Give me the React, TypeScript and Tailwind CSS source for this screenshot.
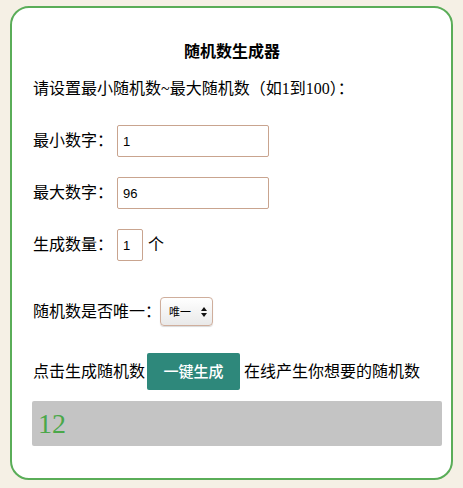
import { useState } from 'react'

const font = { fontFamily: '"Liberation Serif", "Noto Sans CJK SC", serif' }

function Field({ label, value, width }: { label: string; value: string; width: string }) {
	return (
		<div className="flex h-8 items-center">
			<span className="w-[84px] text-[16px] text-black">{label}</span>
			<input
				defaultValue={value}
				className={`${width} h-8 rounded-[2px] border border-[#c9a48f] bg-white px-[5px] text-[13px] text-black outline-none [font-family:'Liberation_Sans',sans-serif]`}
			/>
		</div>
	)
}

export default function App() {
	const [result] = useState('12')

	return (
		<div className="min-h-[488px] w-full bg-[#f5f0e5] px-[10px] pt-[6px] pb-[8px]" style={font}>
			<div className="flex h-[474px] flex-col rounded-[19px] border-2 border-[#5aad58] bg-white pl-[21px] pr-[9px]">
				<h1 className="mt-[33px] pr-[11px] text-center text-[16px] font-bold leading-[22px] text-black">
					随机数生成器
				</h1>
				<p className="mt-[15px] text-[16px] leading-[22px] text-black">
					请设置最小随机数~最大随机数（如1到100）：
				</p>

				<div className="mt-[25px] flex flex-col gap-5">
					<Field label="最小数字：" value="1" width="w-[152px]" />
					<Field label="最大数字：" value="96" width="w-[152px]" />
					<div className="flex h-8 items-center">
						<Field label="生成数量：" value="1" width="w-[26px]" />
						<span className="ml-[5px] text-[16px] text-black">个</span>
					</div>
				</div>

				<div className="mt-[36px] flex h-[29px] items-center">
					<span className="text-[16px] text-black">随机数是否唯一：</span>
					<div className="relative -ml-px">
						<select className="h-[29px] w-[53px] appearance-none rounded-[4px] border border-[#cfae9c] bg-gradient-to-b from-white to-[#e9e9e9] pl-[8px] text-[11px] text-black shadow-[0_1px_1px_rgba(0,0,0,0.15)] outline-none [font-family:'Noto_Sans_CJK_SC',sans-serif]">
							<option>唯一</option>
							<option>不唯一</option>
						</select>
						<svg
							className="pointer-events-none absolute right-[6px] top-[10px]"
							width="6"
							height="10"
							viewBox="0 0 6 10"
						>
							<path d="M3 0 L6 4 L0 4 Z M0 6 L6 6 L3 10 Z" fill="#111" />
						</svg>
					</div>
				</div>

				<div className="mt-[27px] flex h-[37px] items-center">
					<span className="text-[16px] text-black">点击生成随机数</span>
					<button className="ml-[2px] h-[37px] w-[93px] rounded-[2px] bg-[#2e887b] text-[15px] font-medium text-white [font-family:'Noto_Sans_CJK_SC',sans-serif]">
						一键生成
					</button>
					<span className="ml-[4px] text-[16px] text-black">在线产生你想要的随机数</span>
				</div>

				<div className="-ml-px mt-[11px] flex h-[45px] items-center rounded-[2px] bg-[#c4c4c4] px-[6px]">
					<span className="text-[28px] leading-none text-[#4aa84a]">{result}</span>
				</div>
			</div>
		</div>
	)
}
